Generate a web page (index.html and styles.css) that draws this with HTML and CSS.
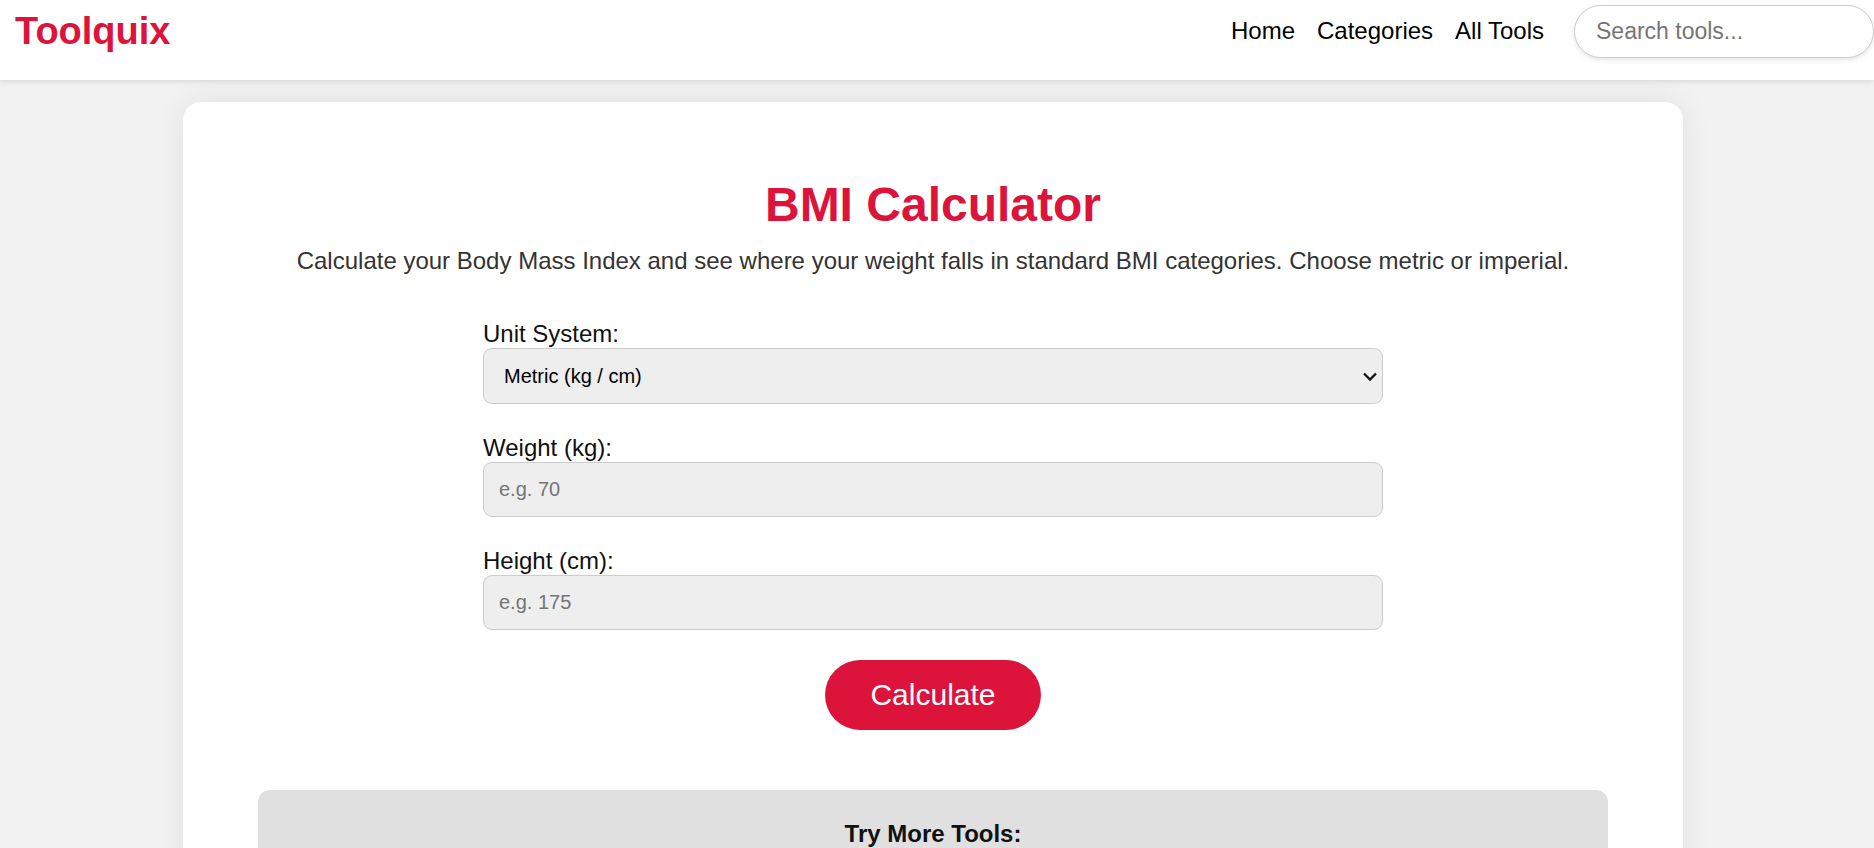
FILE: index.html
```
<!DOCTYPE html>
<html lang="en">

  <head>
    <meta charset="UTF-8">
    <meta name="viewport" content="width=device-width, initial-scale=1.0">
    <title>BMI Calculator - Toolquix</title>
    <link rel="stylesheet" href="styles.css">
  </head>

  <body>
    <header class="site-header">
      <a class="logo" href="#">Toolquix</a>
      <nav class="nav-links">
        <a href="#">Home</a>
        <a href="#">Categories</a>
        <a href="#">All Tools</a>
      </nav>
      <input class="search-bar" type="search" placeholder="Search tools..." aria-label="Search tools">
    </header>

    <main class="page">
      <section class="tool-container">
        <h1>BMI Calculator</h1>
        <p class="description">Calculate your Body Mass Index and see where your weight falls in standard BMI categories. Choose metric or imperial.</p>

        <form class="tool-form">
          <div class="field">
            <label for="unit">Unit System:</label>
            <div class="select-wrap">
              <select id="unit">
                <option>Metric (kg / cm)</option>
                <option>Imperial (lb / in)</option>
              </select>
              <svg class="chevron" width="14" height="10" viewBox="0 0 14 10" aria-hidden="true">
                <path d="M1 1.5 L7 7.5 L13 1.5" fill="none" stroke="#111" stroke-width="2.3"/>
              </svg>
            </div>
          </div>
          <div class="field">
            <label for="weight">Weight (kg):</label>
            <input type="number" id="weight" placeholder="e.g. 70">
          </div>
          <div class="field">
            <label for="height">Height (cm):</label>
            <input type="number" id="height" placeholder="e.g. 175">
          </div>
          <button class="calculate-button" type="button">Calculate</button>
        </form>

        <div class="more-tools">
          <h2>Try More Tools:</h2>
        </div>
      </section>
    </main>
  </body>

</html>
```
FILE: styles.css
```
* {
  box-sizing: border-box;
}

body {
  margin: 0;
  background-color: #f2f2f2;
  color: #111;
  font-family: Arial, 'Liberation Sans', sans-serif;
  font-size: 24px;
  line-height: 28px;
  overflow-x: hidden;
}

/* Header */
.site-header {
  position: relative;
  display: flex;
  align-items: center;
  height: 80px;
  padding: 0 0 18px 15px;
  background-color: #fff;
  box-shadow: 0 2px 6px rgba(0, 0, 0, 0.1);
}

.logo {
  color: crimson;
  font-size: 38px;
  font-weight: bold;
  text-decoration: none;
}

.nav-links {
  display: flex;
  gap: 22px;
  margin-left: auto;
  margin-right: 30px;
}

.nav-links a {
  color: #000;
  text-decoration: none;
}

.search-bar {
  width: 300px;
  height: 53px;
  padding: 0 21px;
  border: 1px solid #ccc;
  border-radius: 30px;
  background-color: #fff;
  box-shadow: 0 2px 5px rgba(0, 0, 0, 0.1);
  font-family: inherit;
  font-size: 23px;
  appearance: none;
}

/* Tool card */
.page {
  padding: 22px 8px 60px 0;
}

.tool-container {
  width: 1500px;
  max-width: 94%;
  margin: 0 auto;
  padding: 75px;
  border-radius: 18px;
  background-color: #fff;
  box-shadow: 0 0 30px rgba(0, 0, 0, 0.08);
  text-align: center;
}

h1 {
  margin: 0 0 14px;
  color: crimson;
  font-size: 48px;
  line-height: 56px;
}

.description {
  margin: 0 0 45px;
  color: #333;
}

.tool-form {
  max-width: 900px;
  margin: 0 auto 60px;
}

.field {
  margin-bottom: 30px;
  text-align: left;
}

.field label {
  display: block;
}

.field input,
.field select {
  display: block;
  width: 100%;
  height: 55px;
  padding: 0 15px;
  border: 1px solid #ccc;
  border-radius: 9px;
  background-color: #eee;
  color: #000;
  font-family: inherit;
  font-size: 20px;
}

.select-wrap {
  position: relative;
}

.field select {
  height: 56px;
  padding: 0 30px 0 20px;
  appearance: none;
}

/* arrow sits on top of the select */
.chevron {
  position: absolute;
  top: 24px;
  right: 6px;
  pointer-events: none;
}

::placeholder {
  color: #757575;
}

.calculate-button {
  height: 70px;
  padding: 0 45px;
  border: none;
  border-radius: 38px;
  background-color: crimson;
  color: #fff;
  font-family: inherit;
  font-size: 30px;
  cursor: pointer;
}

.calculate-button:hover {
  background-color: #b30f30;
}

.more-tools {
  padding: 30px;
  border-radius: 12px;
  background-color: #e0e0e0;
}

.more-tools h2 {
  margin: 0;
  font-size: 24px;
}
```
